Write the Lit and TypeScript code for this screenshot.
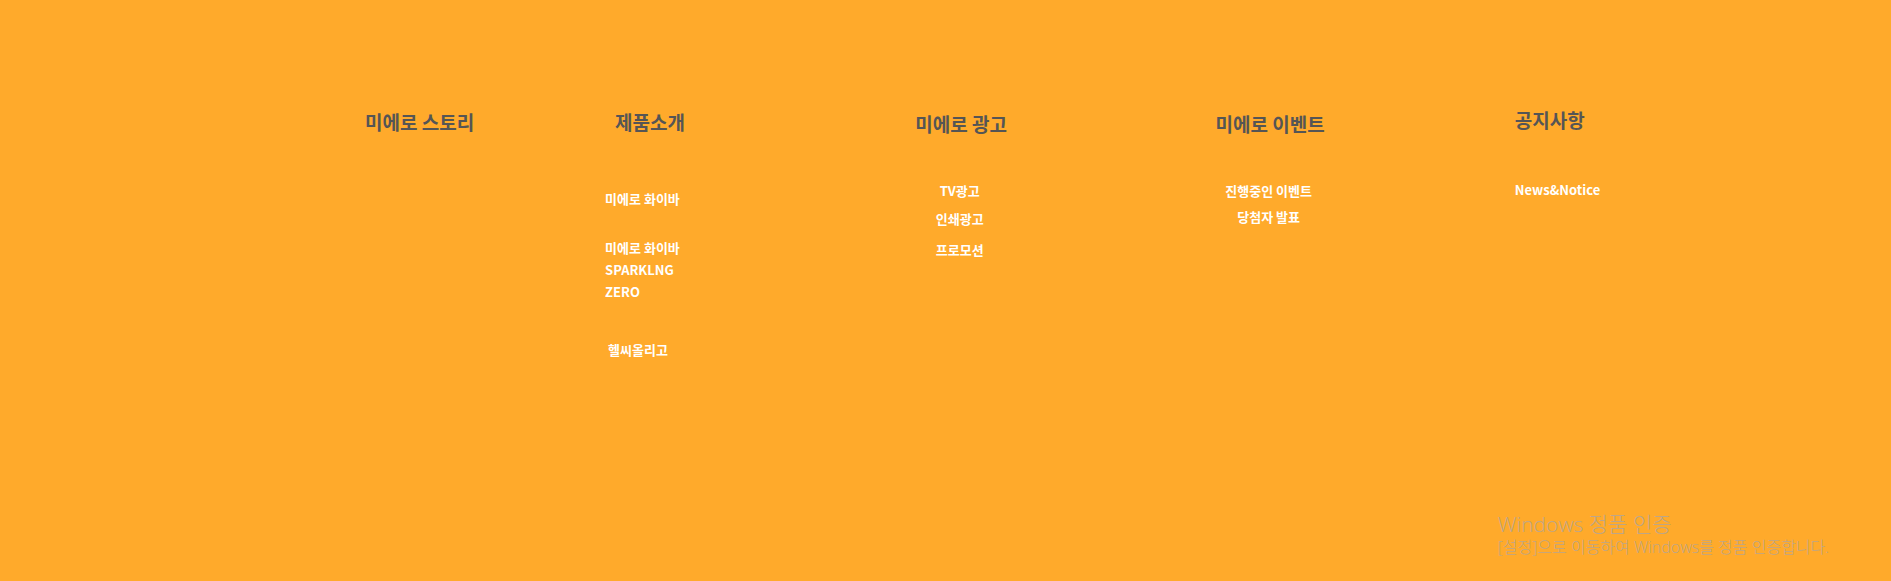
import { LitElement, html, css } from "lit";
import { customElement } from "lit/decorators.js";

interface MenuLink {
  label: string;
  cls?: string;
}

interface MenuColumn {
  title: string;
  cls: string;
  links: MenuLink[];
}

const MENU: MenuColumn[] = [
  { title: "미에로 스토리", cls: "story", links: [] },
  {
    title: "제품소개",
    cls: "products",
    links: [
      { label: "미에로 화이바" },
      { label: "미에로 화이바\nSPARKLNG\nZERO", cls: "gap-lg" },
      { label: "헬씨올리고", cls: "gap-xl indent" },
    ],
  },
  {
    title: "미에로 광고",
    cls: "ads centered",
    links: [
      { label: "TV광고" },
      { label: "인쇄광고", cls: "gap-sm" },
      { label: "프로모션", cls: "gap-md" },
    ],
  },
  {
    title: "미에로 이벤트",
    cls: "events centered",
    links: [
      { label: "진행중인 이벤트" },
      { label: "당첨자 발표", cls: "gap-xs" },
    ],
  },
  { title: "공지사항", cls: "notice", links: [{ label: "News&Notice" }] },
];

@customElement("app-root")
export class AppRoot extends LitElement {
  static styles = css`
    :host {
      display: flex;
      flex-direction: column;
      justify-content: space-between;
      box-sizing: border-box;
      min-height: 100vh;
      padding-bottom: 24px;
      background: #ffaa2b;
      font-family: "Noto Sans CJK KR", sans-serif;
    }
    .menu {
      display: grid;
      grid-template-columns: 240fr 310fr 300fr 299fr 376fr;
      padding: 106px 0 32px 19.3%;
    }
    .column {
      display: flex;
      flex-direction: column;
      align-items: flex-start;
      justify-self: start;
    }
    .centered {
      align-items: center;
    }
    .title {
      margin: 0;
      font-size: 19px;
      line-height: 28px;
      font-weight: 700;
      white-space: nowrap;
    }
    .title a {
      color: #555;
    }
    a {
      color: #fff;
      text-decoration: none;
    }
    .links {
      display: flex;
      flex-direction: column;
      align-items: inherit;
      list-style: none;
      margin: 42px 0 0;
      padding: 0;
      font-size: 13px;
      line-height: 22px;
      font-weight: 700;
      white-space: pre;
    }
    .links a {
      display: block;
    }
    .centered .links {
      padding-right: 3px;
    }
    .products .links {
      margin-top: 52px;
    }
    .notice .links {
      margin-top: 45px;
    }
    .products .title {
      padding-left: 10px;
    }
    .story,
    .products {
      padding-top: 2px;
    }
    .ads,
    .events {
      padding-top: 4px;
    }
    .gap-xs {
      margin-top: 4px;
    }
    .gap-sm {
      margin-top: 6px;
    }
    .gap-md {
      margin-top: 9px;
    }
    .gap-lg {
      margin-top: 27px;
    }
    .gap-xl {
      margin-top: 36px;
    }
    .indent {
      padding-left: 3px;
    }
    .activation {
      width: 20.8%;
      min-width: max-content;
      align-self: flex-end;
      color: #bda688;
      font-family: "Open Sans", "Noto Sans CJK KR", sans-serif;
      font-weight: 300;
    }
    .activation p {
      margin: 0;
      white-space: nowrap;
    }
    .activation .heading {
      font-size: 21px;
      line-height: 26px;
    }
    .activation .detail {
      font-size: 16px;
      line-height: 20px;
    }
  `;

  render() {
    return html`
      <nav class="menu" aria-label="사이트맵">
        ${MENU.map(
          (column) => html`
            <section class="column ${column.cls}">
              <h2 class="title"><a href="#">${column.title}</a></h2>
              ${column.links.length
                ? html`<ul class="links">${column.links.map(
                    (link) =>
                      html`<li class=${link.cls ?? ""}><a href="#">${link.label}</a></li>`
                  )}</ul>`
                : null}
            </section>
          `
        )}
      </nav>
      <aside class="activation">
        <p class="heading">Windows 정품 인증</p>
        <p class="detail">[설정]으로 이동하여 Windows를 정품 인증합니다.</p>
      </aside>
    `;
  }
}
